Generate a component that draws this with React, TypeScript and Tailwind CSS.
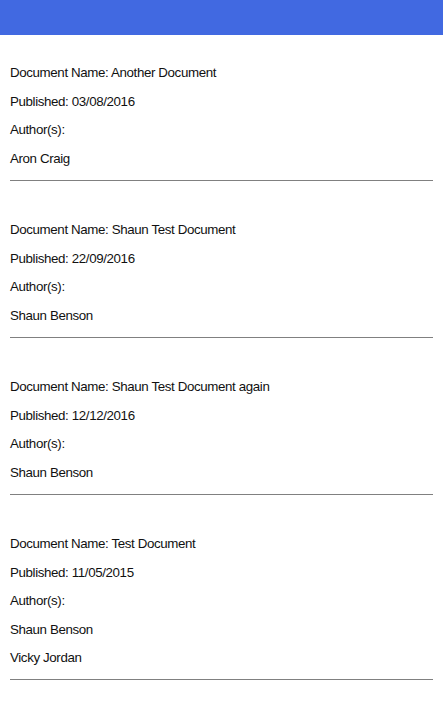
const docs = [
  { name: "Another Document", published: "03/08/2016", authors: ["Aron Craig"] },
  { name: "Shaun Test Document", published: "22/09/2016", authors: ["Shaun Benson"] },
  { name: "Shaun Test Document again", published: "12/12/2016", authors: ["Shaun Benson"] },
  { name: "Test Document", published: "11/05/2015", authors: ["Shaun Benson", "Vicky Jordan"] },
];

export default function App() {
  return (
    <div className="min-h-screen bg-white text-[#111] font-['Liberation_Sans',Arial,sans-serif] text-[13.33px] tracking-[-0.38px]">
      <header className="h-[35px] bg-[#4169e1]" />
      <div className="px-[10px] pt-[24px]">
        {docs.map((doc) => (
          <div key={doc.name} className="mb-[35px]">
            <div className="leading-[28.6px]">
              <div>Document Name: {doc.name}</div>
              <div>Published: {doc.published}</div>
              <div>Author(s):</div>
              {doc.authors.map((a) => (
                <div key={a}>{a}</div>
              ))}
            </div>
            <hr className="mt-[6.6px] border-t border-[#808080]" />
          </div>
        ))}
      </div>
    </div>
  );
}
